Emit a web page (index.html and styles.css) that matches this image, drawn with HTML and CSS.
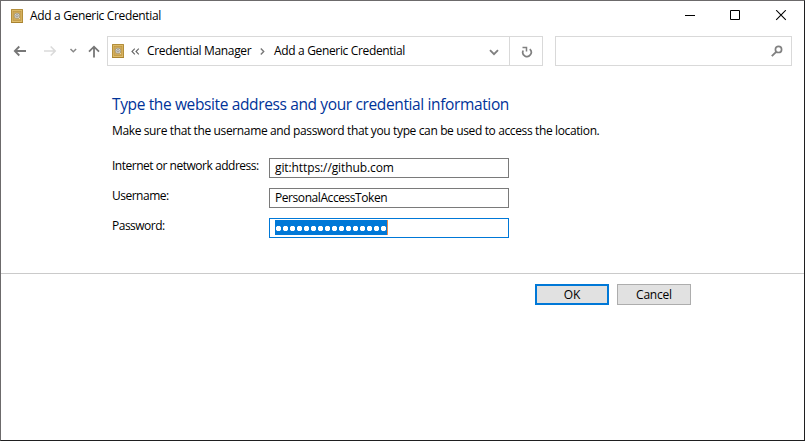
FILE: index.html
```
<!DOCTYPE html>
<html lang="en">
<head>
<meta charset="utf-8">
<title>Add a Generic Credential</title>
<link rel="stylesheet" href="styles.css">
</head>
<body>
<svg width="0" height="0" class="defs" aria-hidden="true">
  <symbol id="safe" viewBox="0 0 12 14">
    <rect width="12" height="14" rx=".6" fill="#a8822f"/>
    <rect x=".8" y=".8" width="10.4" height="12.2" fill="#dfbd6b"/>
    <rect x="2" y="2.2" width="8" height="9.4" fill="#cfaa58" stroke="#b48a3a" stroke-width=".5"/>
    <circle cx="6" cy="6.8" r="3" fill="#a1987f"/>
    <circle cx="6" cy="6.8" r="2.4" fill="#dedbd0"/>
    <circle cx="6" cy="6.8" r="1.2" fill="#eee" stroke="#77705f" stroke-width=".7"/>
    <path d="M7.5 8.5 9 10" stroke="#eee3c0" stroke-width=".8"/>
  </symbol>
</svg>
<div class="window">
  <header class="titlebar">
    <svg class="safe"><use href="#safe"/></svg>
    <h1 class="caption">Add a Generic Credential</h1>
    <svg class="controls" width="104" height="11" viewBox="0 0 104 11" fill="none" stroke="#000">
      <path d="M0 5.5h10"/>
      <path d="M45.5 .5h9v9h-9z"/>
      <path d="M91.2 .2l9.600 9.600M100.800 .2l-9.600 9.600" stroke-width="1.1"/>
    </svg>
  </header>
  <nav class="toolbar">
    <svg class="arrows" width="88" height="14" viewBox="0 0 88 14" fill="none">
      <path d="M13 7H2M6.300 2.500 1.800 7l4.500 4.500" stroke="#777" stroke-width="1.800"/>
      <path d="M31 7h11M37.700 2.500 42.200 7l-4.500 4.500" stroke="#dadada" stroke-width="1.600"/>
      <path d="M57.500 5l2.800 2.800L63.100 5" stroke="#888" stroke-width="1.500"/>
      <path d="M81 13.500V3M76 7.700l5-5 5 5" stroke="#777" stroke-width="1.800"/>
    </svg>
    <div class="address">
      <svg class="safe"><use href="#safe"/></svg>
      <svg class="back-chevrons" width="9" height="7" viewBox="0 0 9 7" fill="none" stroke="#666" stroke-width="1.100"><path d="M3.800 .7 1 3.500l2.800 2.800M7.800 .7 5 3.500l2.800 2.800"/></svg>
      <span class="crumb manager">Credential Manager</span>
      <svg class="separator" width="5" height="7" viewBox="0 0 5 7" fill="none" stroke="#777" stroke-width="1.400"><path d="M.8 .6 3.700 3.500.8 6.400"/></svg>
      <span class="crumb current">Add a Generic Credential</span>
      <svg class="dropdown" width="10" height="7" viewBox="0 0 10 7" fill="none" stroke="#808080" stroke-width="1.900"><path d="M1 1.200l4 4 4-4"/></svg>
      <div class="refresh">
        <svg width="12" height="12" viewBox="0 0 12 12" fill="none" stroke="#808080" stroke-width="1.700"><path d="M2.200 4.500A4.200 4.200 0 1 0 8.800 3.200"/><path d="M1.500 1.500H5.500V5.500" stroke-width="1.500"/></svg>
      </div>
    </div>
    <div class="search">
      <svg width="12" height="12" viewBox="0 0 12 12" fill="none" stroke="#808080"><circle cx="7.500" cy="4.400" r="3.100" stroke-width="1.700"/><path d="M5.200 6.800.8 11.200" stroke-width="1.900"/></svg>
    </div>
  </nav>
  <main class="content">
    <h2>Type the website address and your credential information</h2>
    <p>Make sure that the username and password that you type can be used to access the location.</p>
    <div class="row"><span class="label address-label">Internet or network address:</span><div class="field"><span class="url">git:https://github.com</span></div></div>
    <div class="row"><span class="label">Username:</span><div class="field"><span class="user">PersonalAccessToken</span></div></div>
    <div class="row"><span class="label">Password:</span><div class="field focused"><span class="selection"></span></div></div>
  </main>
  <footer class="actions">
    <button class="ok">OK</button>
    <button class="cancel">Cancel</button>
  </footer>
</div>
</body>
</html>
```

FILE: styles.css
```
* { box-sizing: border-box; }
body { margin: 0; font: 12px/16px "Open Sans", "Noto Sans", sans-serif; letter-spacing: -.34px; color: #000; }
svg { display: block; flex: none; }
.defs { position: absolute; }
.window { width: 805px; height: 441px; background: #fff; border: 1px solid #1f1f20; border-top-color: #6c6a6b; border-left-color: #6c6a6b; overflow: hidden; }
h1, h2, p { margin: 0; font-weight: 400; white-space: nowrap; }
.safe { width: 12px; height: 14px; }
.titlebar { display: flex; align-items: center; height: 29px; padding: 0 15px 0 10px; }
.caption { font-size: 12px; margin-left: 7px; }
.controls { margin-left: auto; }
.toolbar { display: flex; height: 30px; margin-top: 6px; padding-right: 12px; }
.arrows { margin: 8px 6px 0 12px; }
.address { display: flex; align-items: center; width: 436px; border: 1px solid #d9d9d9; padding-left: 4px; }
.back-chevrons { margin-left: 7px; }
.crumb { white-space: nowrap; }
.manager { width: 104px; margin-left: 7px; }
.separator { margin-left: 9px; }
.current { margin-left: 9px; }
.dropdown { margin: 2px 10px 0 auto; }
.refresh { width: 33px; height: 28px; border-left: 1px solid #d9d9d9; display: grid; place-items: center; }
.refresh svg { margin: 2px 0 0 2px; }
.search { width: 237px; margin-left: 12px; border: 1px solid #d9d9d9; display: flex; align-items: center; justify-content: flex-end; padding-right: 8px; }
.content { padding: 28px 0 0 111px; height: 207px; }
h2 { font-size: 15.5px; line-height: 20px; letter-spacing: -.37px; color: #003399; }
p { margin-top: 9px; letter-spacing: -.37px; }
.row { display: flex; height: 20px; margin-bottom: 10px; }
p + .row { margin-top: 19px; }
.label { width: 157px; white-space: nowrap; letter-spacing: -.5px; }
.address-label { letter-spacing: -.48px; }
.field { width: 240px; height: 20px; border: 1px solid #7a7a7a; padding-left: 5px; line-height: 18px; }
.url { letter-spacing: -.1px; }
.user { letter-spacing: -.43px; }
.focused { border-color: #0078d7; }
.selection { display: block; width: 113px; height: 15px; margin-top: 1px; background: radial-gradient(circle at 3.5px 8.5px, #fff 2.4px, #0078d7 3px) 0 0 / 7px 16px; border-right: 1px solid #e98a4c; }
.actions { display: flex; gap: 8px; height: 167px; padding: 10px 0 0 534px; border-top: 1px solid #cacaca; }
button { width: 74px; height: 21px; padding: 0; font: inherit; letter-spacing: -.2px; line-height: 17px; color: #000; background: #e1e1e1; border: 1px solid #adadad; }
.ok { border: 2px solid #0078d7; }
```
